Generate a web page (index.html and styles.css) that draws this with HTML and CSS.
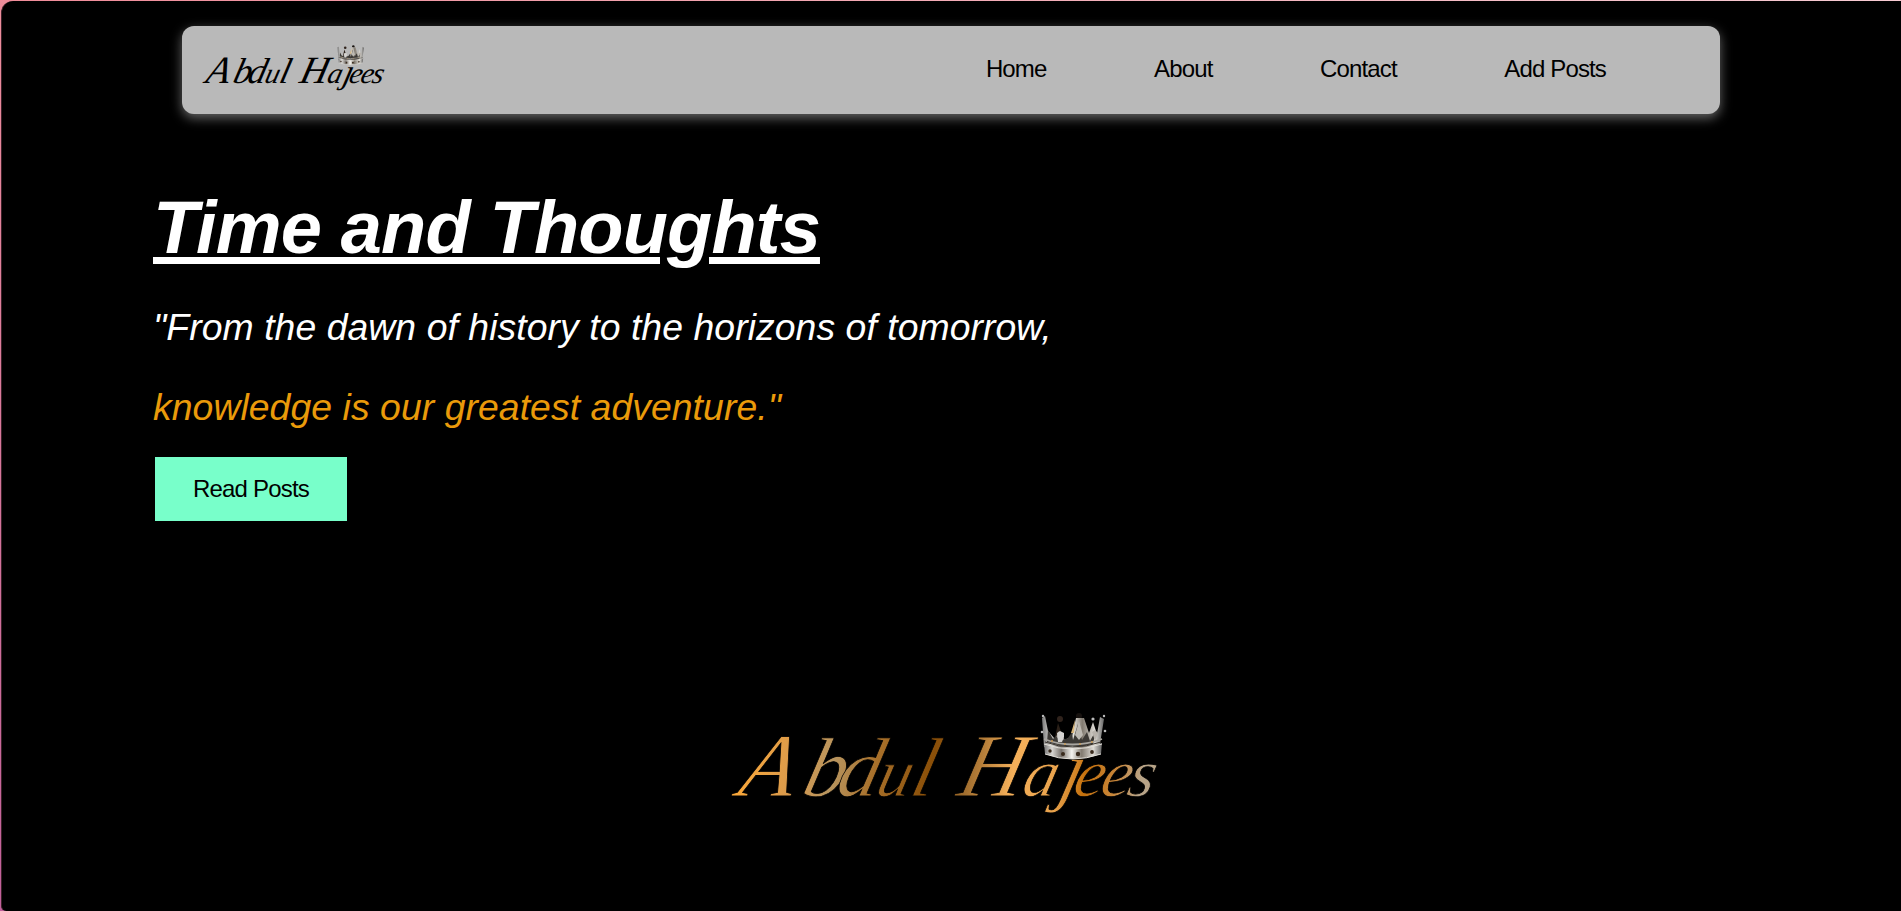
FILE: index.html
```html
<!DOCTYPE html>
<html lang="en">
<head>
<meta charset="utf-8">
<title>Time and Thoughts</title>
<link rel="stylesheet" href="styles.css">
</head>
<body>
<svg class="defs" width="0" height="0" aria-hidden="true">
  <defs>
    <linearGradient id="gold" gradientUnits="userSpaceOnUse" x1="0" y1="0" x2="430" y2="-30">
      <stop offset="0" stop-color="#ffaa38"/><stop offset=".14" stop-color="#d99a4c"/>
      <stop offset=".23" stop-color="#b8955f"/><stop offset=".33" stop-color="#a8702a"/>
      <stop offset=".46" stop-color="#8a4f08"/><stop offset=".54" stop-color="#9c6a2c"/>
      <stop offset=".65" stop-color="#f5b05a"/><stop offset=".76" stop-color="#e8a24c"/>
      <stop offset=".82" stop-color="#c4700c"/><stop offset=".89" stop-color="#c8863a"/>
      <stop offset=".95" stop-color="#b8a488"/>
    </linearGradient>
    <linearGradient id="silver" x1="0" x2="1" y1="0" y2="0">
      <stop offset="0" stop-color="#777"/><stop offset=".14" stop-color="#d8d6d2"/>
      <stop offset=".3" stop-color="#77716b"/><stop offset=".48" stop-color="#f6f4ef"/>
      <stop offset=".65" stop-color="#817a70"/><stop offset=".85" stop-color="#dedbd5"/>
      <stop offset="1" stop-color="#666"/>
    </linearGradient>
    <symbol id="crown" viewBox="0 0 66 48" overflow="visible">
      <path d="M15 24 18 10l5 14zM34 18 39 4l5 16z" fill="#2b2018"/>
      <circle cx="20" cy="6" r="3" fill="#30231c"/><circle cx="39" cy="3" r="3" fill="#17120f"/>
      <path d="M2 5 5 3l3 15 7 8 4-8 6 9 7-4 4-18h8l5 15 4-11 4 12 3-17 4 2-5 31Q33 44 4 34Z" fill="url(#silver)"/>
      <path d="M8 17l5 9 3-3 4 5 8-3 4-6 1 8 5-16 4 16 5-8 3 9 6-11-3 14Q32 37 7 29z" fill="#3c3935"/>
      <path d="M39 8l-4 14 4 5 4-5z" fill="#bdb9b2"/><path d="M31 20l4-13-1 13z" fill="#d8b67c"/>
      <path d="M17 20l3-2 4 2v4l-2 5h-4z" fill="#d5d3d0"/><path d="M52 19l3-2 3 3-3 8z" fill="#b8b3ac"/>
      <path d="M4 26Q32 37 62 26" fill="none" stroke="#a9a6a0" stroke-width="1.8"/>
      <path d="M4 30Q32 40 62 30l-1 11Q33 51 5 41z" fill="url(#silver)"/>
      <path d="M4 31Q32 41 62 31M5 41Q32 51 61 41" fill="none" stroke="#e3e0da" stroke-width="1"/>
      <path d="M5 29Q32 39 61 29" fill="none" stroke="#37322c" stroke-width="1"/>
      <g fill="#392a1c"><circle cx="10" cy="38" r="1.7"/><circle cx="23" cy="41" r="2"/><circle cx="38" cy="41" r="2.2"/><circle cx="52" cy="39" r="1.9"/></g>
      <g fill="#bbb"><circle cx="3" cy="3" r="1.2"/><circle cx="53" cy="6" r="1.6"/><circle cx="64" cy="3" r="1.2"/><circle cx="2" cy="19" r="1.3"/><circle cx="65" cy="18" r="1.3"/></g>
      <g fill="#c89b58"><circle cx="12" cy="28" r="1"/><circle cx="25" cy="31" r="1"/><circle cx="40" cy="31" r="1"/><circle cx="52" cy="29" r="1"/></g>
    </symbol>
  </defs>
</svg>
<div class="page">
  <header class="navbar">
    <svg class="logo" viewBox="0 0 430 125" role="img" aria-label="Abdul Hajees">
      <g transform="translate(0 93) skewX(-14)"><text class="signature" x="8 72 106 146 180 200 227 292 329 343 370 397"><tspan class="cap">A</tspan><tspan class="tall">bd</tspan>u<tspan class="tall">l</tspan> <tspan class="cap">H</tspan>a<tspan class="tail">j</tspan>ees</text></g>
      <use href="#crown" x="313" y="5" width="74" height="48"/>
    </svg>
    <nav class="links">
      <a>Home</a><a>About</a><a>Contact</a><a>Add Posts</a>
    </nav>
  </header>
  <main class="hero">
    <h1>Time and Thoughts</h1>
    <p class="quote">"From the dawn of history to the horizons of tomorrow,</p>
    <p class="quote accent">knowledge is our greatest adventure."</p>
    <a class="button">Read Posts</a>
  </main>
  <footer class="footer">
    <svg class="mark" viewBox="0 0 430 125" role="img" aria-label="Abdul Hajees">
      <g transform="translate(0 93) skewX(-14)"><text class="signature gold" x="8 72 106 146 180 200 227 292 329 343 370 397"><tspan class="cap">A</tspan><tspan class="tall">bd</tspan>u<tspan class="tall">l</tspan> <tspan class="cap">H</tspan>a<tspan class="tail">j</tspan>ees</text></g>
      <use href="#crown" x="312" y="10" width="66" height="48"/>
    </svg>
  </footer>
</div>
</body>
</html>
```
FILE: styles.css
```css
* { box-sizing: border-box; }
body {
  margin: 0;
  height: 911px;
  overflow: hidden;
  padding: 1px 0 0 1px;
  font-family: "Liberation Sans", Arial, sans-serif;
  background: linear-gradient(to right, #f08c99, #f7cbd3) top / 100% 1px no-repeat,
    linear-gradient(#ee8e9b, #c0609b);
}
.defs { position: absolute; }
.page {
  height: 910px;
  padding: 25px 0 0 151px;
  background: #000;
  border-left: 1px solid #3c2029;
  border-radius: 12px 0 0 5px;
  display: flex;
  flex-direction: column;
}
.navbar {
  width: 1538px;
  height: 88px;
  flex: none;
  margin-left: 29px;
  padding: 0 114px 0 19px;
  display: flex;
  justify-content: space-between;
  background: #b9b9b9;
  border-radius: 12px;
  box-shadow: 0 4px 12px rgba(255, 255, 255, .4);
}
.logo { width: 184px; height: 53.5px; margin-top: 17px; overflow: visible; }
.links {
  display: flex;
  gap: 107.5px;
  padding-top: 29px;
  font-size: 24px;
  line-height: 28px;
  letter-spacing: -.85px;
  color: #000;
}
.hero { display: flex; flex-direction: column; align-items: flex-start; }
h1 {
  margin: 72px 0 0;
  font-size: 74px;
  line-height: 84px;
  font-style: italic;
  letter-spacing: -.83px;
  color: #fff;
  text-decoration: underline;
  text-decoration-thickness: 7px;
}
.quote {
  margin: 36px 0 0;
  font-size: 37.33px;
  line-height: 42px;
  font-style: italic;
  letter-spacing: .07px;
  color: #fff;
}
.quote.accent { margin-top: 38px; color: #ea9a0a; }
.button {
  width: 192px;
  height: 64px;
  margin: 29px 0 0 2px;
  display: flex;
  align-items: center;
  justify-content: center;
  background: #78ffca;
  color: #000;
  font-size: 24px;
  letter-spacing: -.8px;
}
.footer { padding: 182px 0 0 575px; }
.mark { display: block; width: 430px; height: 125px; overflow: visible; }
.signature {
  font-family: "Liberation Serif", serif;
  font-style: italic;
  font-size: 68px;
  fill: #000;
}
.cap { font-size: 90px; }
.tall { font-size: 84px; }
.tail { font-size: 80px; }
.gold { fill: url(#gold); stroke: #000; stroke-width: .8px; }
```
